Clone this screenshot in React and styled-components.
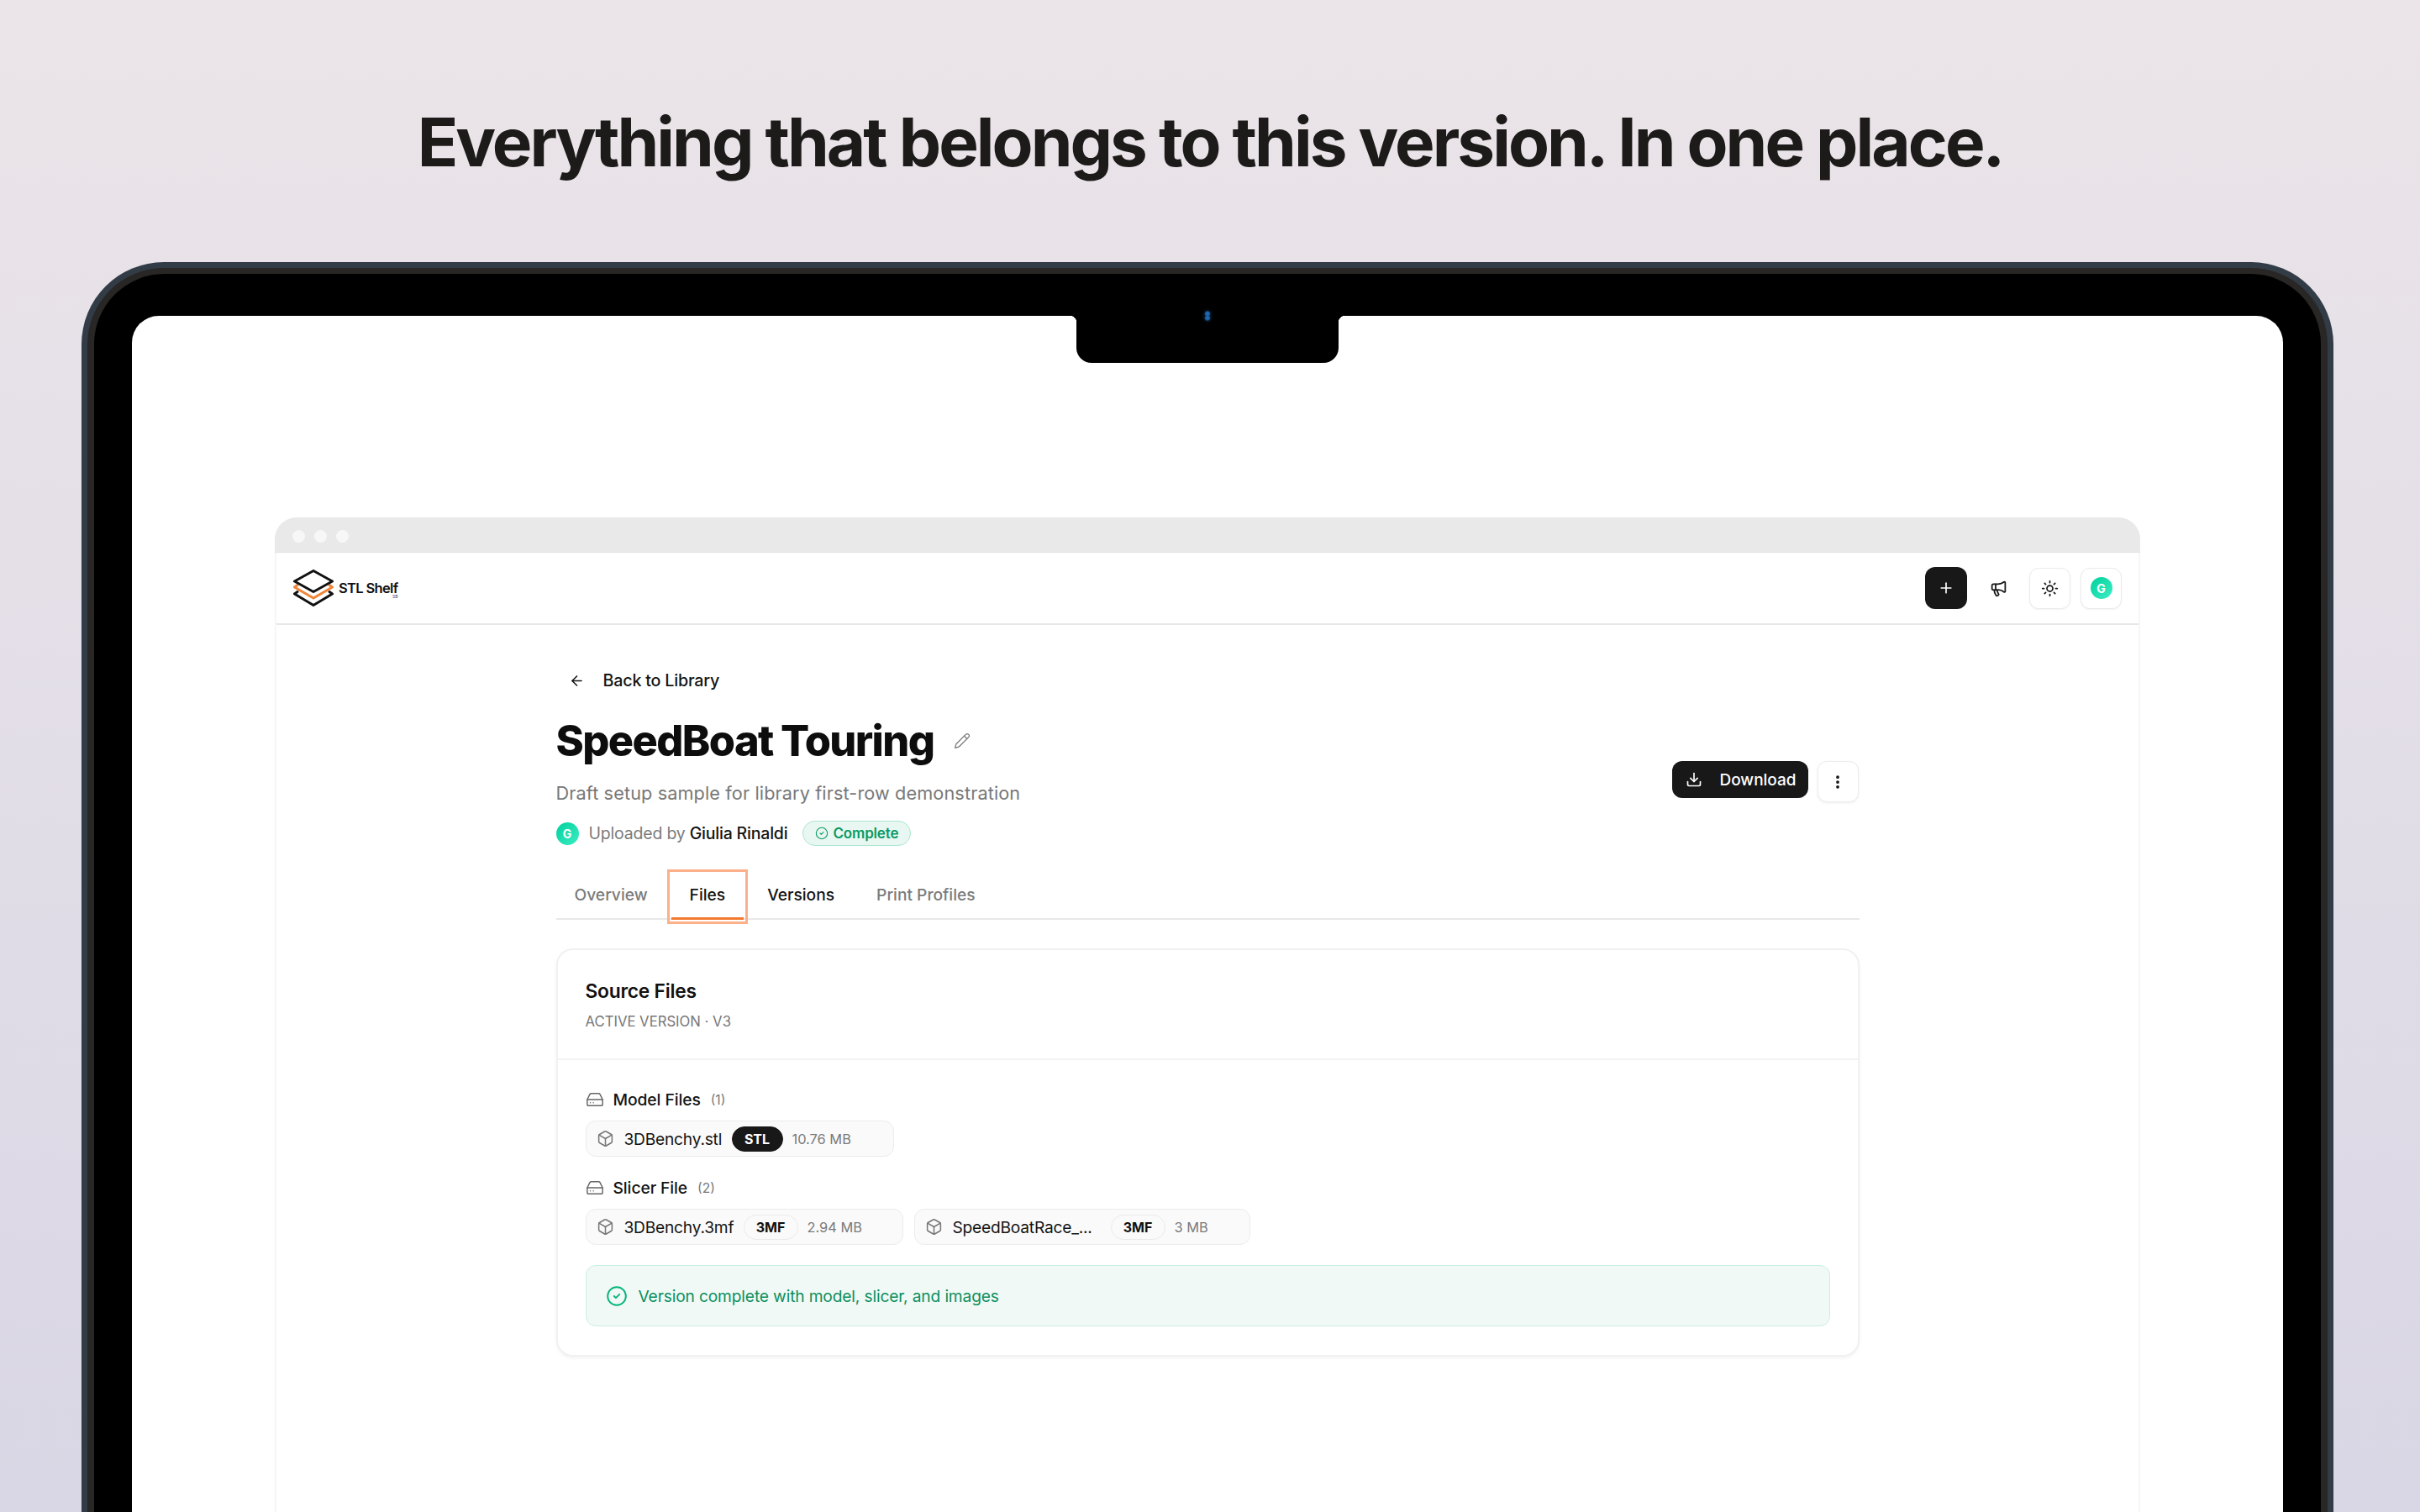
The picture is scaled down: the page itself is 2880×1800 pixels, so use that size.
import React from "react";
import styled, { createGlobalStyle } from "styled-components";
import { ArrowLeft, Pencil, Plus, Megaphone, Sun, Download, EllipsisVertical, Box, HardDrive, CircleCheck } from "lucide-react";

const Global = createGlobalStyle`
  html, body { margin: 0; padding: 0; }
  body { font-family: Inter, "Liberation Sans", sans-serif; color: #111; }
  * { box-sizing: border-box; }
`;

const Page = styled.div`
  width: 2880px; height: 1800px; overflow: hidden;
  background: linear-gradient(180deg, #ebe5e9 0%, #d9d6e5 100%);
  padding: 119px 103px 0 97px;
`;
const Headline = styled.h1`
  margin: 0 -6px 0 0; height: 100px; line-height: 100px; text-align: center;
  font-size: 80px; font-weight: 700; letter-spacing: -0.037em; color: #1d1a1a;
`;
const Device = styled.div`
  margin-top: 93px; background: #323c46; padding: 7px 7px 0;
  border-radius: 98px 98px 0 0; height: 1488px;
`;
const Rim = styled.div`
  background: #292725; padding: 7px 8px 0; border-radius: 91px 91px 0 0; height: 100%;
`;
const Bezel = styled.div`
  background: #000; padding: 50px 45px 0; border-radius: 84px 84px 0 0; height: 100%;
`;
const Screen = styled.div`
  position: relative; background: #fff; border-radius: 32px 32px 0 0; height: 100%;
  padding: 240px 170px 0 170px;
`;
const Notch = styled.div`
  position: absolute; top: 0; left: 1124px; width: 312px; height: 56px;
  background: #000; border-radius: 0 0 18px 18px;
  display: flex; justify-content: center;
  &::before, &::after {
    content: ""; position: absolute; top: 0; width: 8px; height: 8px;
  }
  &::before { left: -8px; background: radial-gradient(circle at 0 100%, #fff 8px, #000 8.5px); }
  &::after { right: -8px; background: radial-gradient(circle at 100% 100%, #fff 8px, #000 8.5px); }
`;
const Camera = styled.span`
  width: 14px; height: 18px; margin-top: -9px; border-radius: 50%;
  background:
    radial-gradient(circle 4px at 50% 36%, #1f74c4 0%, #1a5c9f 60%, transparent 100%),
    radial-gradient(circle 4px at 50% 64%, #1f74c4 0%, #1a5c9f 60%, transparent 100%),
    radial-gradient(ellipse at center, #0b1b2c 0%, #000 85%);
`;
const Browser = styled.div`
  height: 100%; border: 2px solid #f6f6f6; border-bottom: 0; border-top: 0;
  border-radius: 26px 26px 0 0;
`;
const TitleBar = styled.div`
  height: 42px; margin: 0 -2px; background: #e9e9ea; border-radius: 26px 26px 0 0;
  border-bottom: 1px solid #e3e3e3;
  display: flex; align-items: center; gap: 11px; padding: 4px 0 0 21px;
`;
const Dot = styled.span`
  width: 15px; height: 15px; border-radius: 50%; background: #f7f7f7;
`;
const Nav = styled.div`
  height: 86px; border-bottom: 2px solid #e7e7e7; display: flex; align-items: center;
  justify-content: space-between; padding: 0 20px 0 20px;
`;
const Brand = styled.div`
  display: flex; align-items: center; gap: 6px; position: relative;
`;
const BrandName = styled.span`
  font-size: 16.5px; font-weight: 600; letter-spacing: -0.04em; color: #111;
`;
const BrandTiny = styled.span`
  position: absolute; right: 0; top: 29px; font-size: 5px; line-height: 6px; color: #444;
`;
const NavActions = styled.div`
  display: flex; align-items: center;
`;
const PrimaryIcon = styled.div`
  width: 50px; height: 50px; border-radius: 12px; background: #181818; color: #fff;
  display: flex; align-items: center; justify-content: center;
`;
const GhostIcon = styled.div`
  width: 48px; height: 50px; margin: 0 13px; display: flex; align-items: center;
  justify-content: center; color: #151515;
`;
const OutlineIcon = styled.div`
  width: 49px; height: 49px; border-radius: 11px; border: 1.5px solid #ebebeb; background: #fff;
  display: flex; align-items: center; justify-content: center; color: #151515;
  margin-left: ${p => p.$gap || 0}px;
  box-shadow: 0 1px 2px rgba(0,0,0,.05);
`;
const Avatar = styled.div`
  width: ${p => p.$size}px; height: ${p => p.$size}px; border-radius: 50%;
  background: linear-gradient(135deg, #00d09c, #3ceec5); color: #fff;
  display: flex; align-items: center; justify-content: center;
  font-size: ${p => p.$font}px; font-weight: 700;
`;
const Main = styled.main`
  width: 1551px; margin: 0 auto; padding-top: 51px;
`;
const Back = styled.div`
  display: flex; align-items: center; gap: 22px; padding-left: 15px; height: 30px;
  font-size: 19.7px; font-weight: 500; letter-spacing: -0.01em; color: #151515;
`;
const Header = styled.div`
  display: flex; justify-content: space-between; align-items: flex-end; margin-top: 24px;
`;
const TitleRow = styled.div`
  display: flex; align-items: center; gap: 24px; height: 66px;
`;
const Title = styled.h2`
  margin: 0; font-size: 50.5px; line-height: 66px; font-weight: 800; letter-spacing: -0.032em; color: #0d0d0d;
`;
const Description = styled.p`
  margin: 14px 0 0; font-size: 21.7px; line-height: 30px; color: #787878; letter-spacing: 0.005em;
`;
const Meta = styled.div`
  display: flex; align-items: center; margin-top: 18px; height: 30px;
  font-size: 19.5px; color: #7b7b7b; font-weight: 400;
`;
const MetaText = styled.span`
  margin-left: 12px; letter-spacing: -0.01em;
`;
const Strong = styled.span`
  color: #141414; font-weight: 500; margin-left: 5px;
`;
const Badge = styled.span`
  display: inline-flex; align-items: center; gap: 5px; height: 30px; margin-left: 18px;
  padding: 0 14px; border-radius: 15px; background: #e8f7f1; border: 1.5px solid #a8e7cd;
  color: #0a9a63; font-size: 17px; font-weight: 600; letter-spacing: -0.01em;
`;
const Actions = styled.div`
  display: flex; align-items: flex-start; gap: 11px; margin: 0 1px 52px 0;
`;
const DownloadButton = styled.div`
  display: flex; align-items: center; gap: 21px; height: 44px; width: 162px; padding-left: 16px;
  border-radius: 12px; background: #181818; color: #fff; font-size: 19px; font-weight: 500;
`;
const MoreButton = styled.div`
  width: 49px; height: 49px; border-radius: 11px; border: 1.5px solid #ececec; background: #fff;
  display: flex; align-items: center; justify-content: center; color: #111;
  box-shadow: 0 1px 3px rgba(0,0,0,.07);
`;
const Tabs = styled.div`
  display: flex; gap: 6px; margin-top: 33px; height: 55px; border-bottom: 2px solid #e8e8e8;
`;
const Tab = styled.div`
  position: relative; padding: 0 22px 6px; display: flex; align-items: center; height: 55px;
  font-size: 19.2px; font-weight: 500; color: ${p => p.$dark ? "#141414" : "#7b7b7b"};
  ${p => p.$active && `
    outline: 3px solid #fbb08a; outline-offset: 2px;
    &::after { content: ""; position: absolute; left: 0; right: 0; bottom: 0; height: 3px; background: #f27a30; }
  `}
`;
const Card = styled.section`
  margin-top: 34px; border: 2px solid #f1f1f1; border-radius: 20px; background: #fff;
  box-shadow: 0 2px 4px rgba(0,0,0,.05);
`;
const CardHead = styled.div`
  height: 131px; padding: 31px 33px 0; border-bottom: 2px solid #f3f3f3;
`;
const CardTitle = styled.h3`
  margin: 0; font-size: 22.8px; line-height: 36px; font-weight: 600; letter-spacing: -0.01em; color: #111;
`;
const CardSub = styled.div`
  margin-top: 8px; font-size: 16.7px; line-height: 20px; color: #777; letter-spacing: 0;
`;
const CardBody = styled.div`
  padding: 35px 33px 34px;
`;
const Group = styled.div`
  margin-bottom: ${p => p.$last ? 24 : 25}px;
`;
const GroupLabel = styled.div`
  display: flex; align-items: center; height: 24px; color: #666;
`;
const GroupName = styled.span`
  margin-left: 11px; font-size: 19.3px; font-weight: 500; color: #141414; letter-spacing: -0.005em;
`;
const GroupCount = styled.span`
  margin-left: 12px; font-size: 15.5px; color: #777;
`;
const Chips = styled.div`
  display: flex; gap: 13px; margin-top: 13px;
`;
const Chip = styled.div`
  display: flex; align-items: center; height: 43px; width: ${p => p.$w}px; padding-left: 12px;
  background: #fafafa; border: 1.5px solid #ececec; border-radius: 12px;
  color: #777;
`;
const FileName = styled.span`
  margin-left: 12px; width: ${p => p.$w}px; font-size: 19.2px; color: #141414; white-space: nowrap; letter-spacing: -0.012em;
`;
const Pill = styled.span`
  display: flex; align-items: center; justify-content: center; height: 30px; width: ${p => p.$w}px;
  margin-left: 12px; border-radius: 15px; font-size: 16px; font-weight: 700;
  background: ${p => p.$dark ? "#181818" : "#fafafa"}; color: ${p => p.$dark ? "#fff" : "#111"};
  border: 1.5px solid ${p => p.$dark ? "#181818" : "#ebebeb"};
`;
const Size = styled.span`
  margin-left: 11px; font-size: 16.4px; color: #7a7a7a; white-space: nowrap;
`;
const Alert = styled.div`
  display: flex; align-items: center; gap: 13px; height: 73px; padding-left: 23px;
  background: #f1f9f6; border: 1.5px solid #c9f0e0; border-radius: 12px;
  color: #0c8f5e; font-size: 19.2px; letter-spacing: -0.008em;
`;
const CheckIcon = styled.span`
  display: flex; color: #06b67d;
`;

const Logo = () => (
  <svg width="48" height="44" viewBox="0 0 48 44" fill="none" strokeWidth="3" strokeLinejoin="round" strokeLinecap="round">
    <path d="M5 26.5 1.5 29 24 42.5 46.5 29 43 26.5" stroke="#111" />
    <path d="M5 18.5 1.5 21 24 34 46.5 21 43 18.5" stroke="#f08437" />
    <path d="M24 1.5 46.5 14 24 26.5 1.5 14Z" stroke="#111" fill="#fff" />
  </svg>
);

const File = ({ name, nameW, type, dark, pillW, size, w }) => (
  <Chip $w={w}>
    <Box size={21} strokeWidth={1.75} />
    <FileName $w={nameW}>{name}</FileName>
    <Pill $dark={dark} $w={pillW}>{type}</Pill>
    <Size>{size}</Size>
  </Chip>
);

export default function App() {
  return (
    <Page>
      <Global />
      <Headline>Everything that belongs to this version. In one place.</Headline>
      <Device>
        <Rim>
          <Bezel>
            <Screen>
              <Notch><Camera /></Notch>
              <Browser>
                <TitleBar><Dot /><Dot /><Dot /></TitleBar>
                <Nav>
                  <Brand>
                    <Logo />
                    <BrandName>STL Shelf</BrandName>
                    <BrandTiny>SB</BrandTiny>
                  </Brand>
                  <NavActions>
                    <PrimaryIcon><Plus size={20} strokeWidth={2} /></PrimaryIcon>
                    <GhostIcon><Megaphone size={21} strokeWidth={2} /></GhostIcon>
                    <OutlineIcon><Sun size={21} strokeWidth={2} /></OutlineIcon>
                    <OutlineIcon $gap={12}><Avatar $size={26} $font={14}>G</Avatar></OutlineIcon>
                  </NavActions>
                </Nav>
                <Main>
                  <Back><ArrowLeft size={19} strokeWidth={2} />Back to Library</Back>
                  <Header>
                    <div>
                      <TitleRow>
                        <Title>SpeedBoat Touring</Title>
                        <Pencil size={20} strokeWidth={1.5} color="#777" />
                      </TitleRow>
                      <Description>Draft setup sample for library first-row demonstration</Description>
                      <Meta>
                        <Avatar $size={27} $font={14}>G</Avatar>
                        <MetaText>Uploaded by<Strong>Giulia Rinaldi</Strong></MetaText>
                        <Badge><CircleCheck size={16} strokeWidth={1.6} />Complete</Badge>
                      </Meta>
                    </div>
                    <Actions>
                      <DownloadButton><Download size={20} strokeWidth={2} />Download</DownloadButton>
                      <MoreButton><EllipsisVertical size={20} strokeWidth={2.5} /></MoreButton>
                    </Actions>
                  </Header>
                  <Tabs>
                    <Tab>Overview</Tab>
                    <Tab $active $dark>Files</Tab>
                    <Tab $dark>Versions</Tab>
                    <Tab>Print Profiles</Tab>
                  </Tabs>
                  <Card>
                    <CardHead>
                      <CardTitle>Source Files</CardTitle>
                      <CardSub>ACTIVE VERSION · V3</CardSub>
                    </CardHead>
                    <CardBody>
                      <Group>
                        <GroupLabel>
                          <HardDrive size={22} strokeWidth={1.6} />
                          <GroupName>Model Files</GroupName>
                          <GroupCount>(1)</GroupCount>
                        </GroupLabel>
                        <Chips>
                          <File w={367} name="3DBenchy.stl" nameW={116} type="STL" dark pillW={61} size="10.76 MB" />
                        </Chips>
                      </Group>
                      <Group $last>
                        <GroupLabel>
                          <HardDrive size={22} strokeWidth={1.6} />
                          <GroupName>Slicer File</GroupName>
                          <GroupCount>(2)</GroupCount>
                        </GroupLabel>
                        <Chips>
                          <File w={378} name="3DBenchy.3mf" nameW={130} type="3MF" pillW={65} size="2.94 MB" />
                          <File w={400} name="SpeedBoatRace_..." nameW={176} type="3MF" pillW={65} size="3 MB" />
                        </Chips>
                      </Group>
                      <Alert>
                        <CheckIcon><CircleCheck size={26} strokeWidth={1.8} /></CheckIcon>
                        Version complete with model, slicer, and images
                      </Alert>
                    </CardBody>
                  </Card>
                </Main>
              </Browser>
            </Screen>
          </Bezel>
        </Rim>
      </Device>
    </Page>
  );
}
